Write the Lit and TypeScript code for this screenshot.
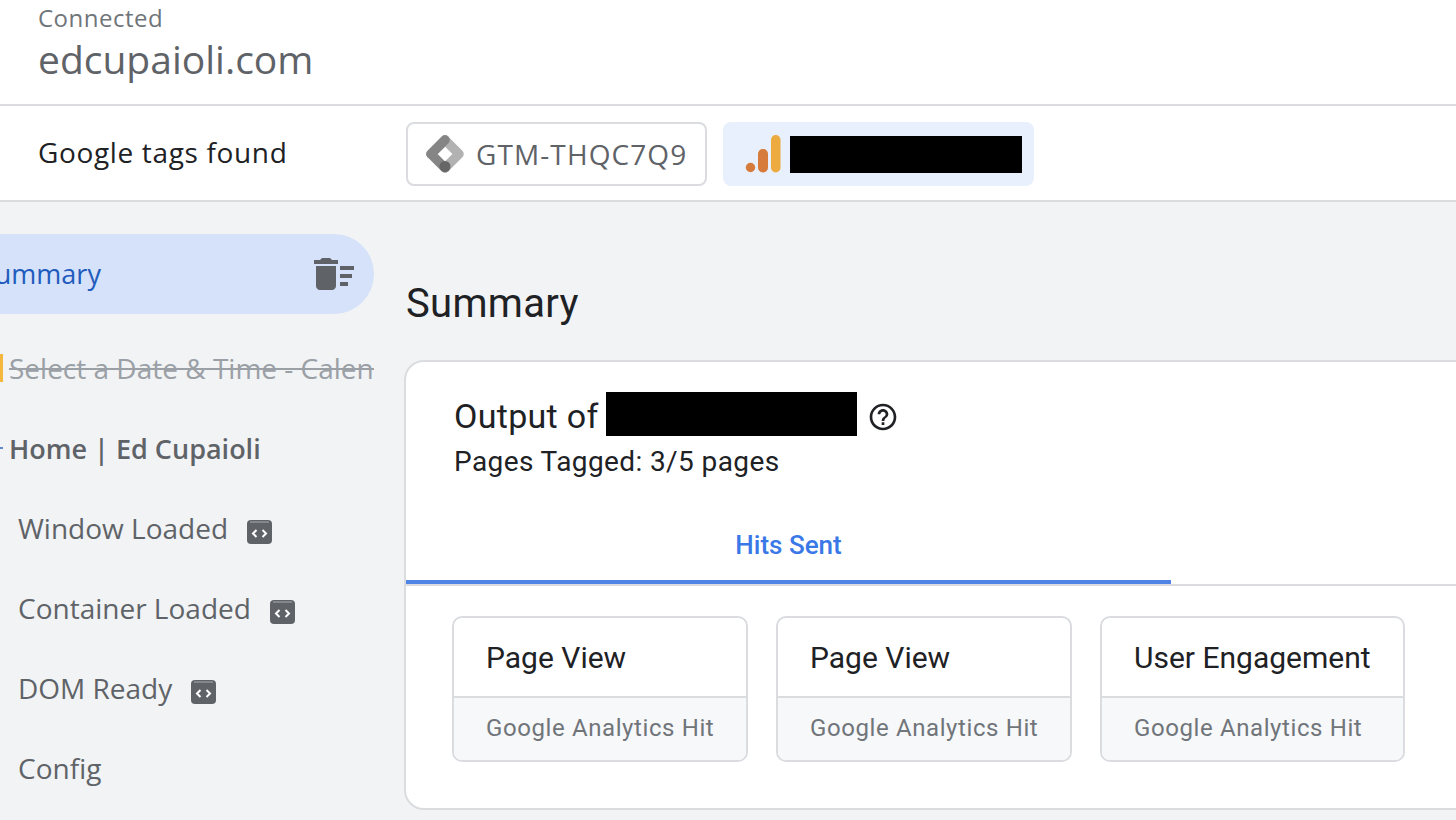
import { LitElement, html, css, svg } from 'lit';
import { customElement } from 'lit/decorators.js';

const codeBadge = html`<svg class="badge" width="25" height="24" viewBox="0 0 25 24">
  <rect x="0" y="0" width="25" height="24" rx="4" fill="#5f6368"></rect>
  <path d="M3 2h19" stroke="#a9acb0" stroke-width="1" fill="none"></path>
  <path d="M9.5 10l-3.5 3.5 3.5 3.5M15.5 10l3.5 3.5-3.5 3.5" stroke="#fff" stroke-width="2" fill="none"></path>
</svg>`;

const gtmIcon = svg`<svg class="tag-icon" width="38" height="38" viewBox="0 0 38 38">
  <path d="M19 5L5 19l14 14" stroke="#858585" stroke-width="9.5" stroke-linecap="round" stroke-linejoin="round" fill="none"></path>
  <path d="M19 5l14 14-14 14" stroke="#b2b2b2" stroke-width="9.5" stroke-linecap="round" stroke-linejoin="round" fill="none"></path>
  <path d="M5 19L19 5" stroke="#858585" stroke-width="9.5" stroke-linecap="round" fill="none"></path>
  <circle cx="19" cy="31.5" r="5.5" fill="#666"></circle>
</svg>`;

const gaIcon = svg`<svg width="36" height="40" viewBox="0 0 36 40">
  <circle cx="5.5" cy="33.5" r="4.7" fill="#d67b3b"></circle>
  <rect x="13" y="15" width="10" height="23.5" rx="4.7" fill="#d67b3b"></rect>
  <rect x="26" y="1" width="9.5" height="37.5" rx="4.7" fill="#ecaa3f"></rect>
</svg>`;

@customElement('app-root')
export class AppRoot extends LitElement {
  static styles = css`
    :host {
      display: block;
      width: 1456px;
      height: 820px;
      overflow: hidden;
      background: #f1f3f5;
      font-family: 'Open Sans', 'Noto Sans', sans-serif;
    }
    .connected {
      background: #fff;
      height: 106px;
      padding: 3px 0 0 38px;
      box-sizing: border-box;
      border-bottom: 2px solid #dadce0;
      color: #5f6368;
    }
    .connected small {
      display: block;
      font-size: 24px;
      letter-spacing: 0.5px;
      line-height: 30px;
      color: #70757a;
    }
    .connected strong {
      display: block;
      font-weight: 400;
      font-size: 39px;
      line-height: 52px;
    }
    .tags {
      background: #fff;
      height: 96px;
      padding: 2px 0 0 38px;
      box-sizing: border-box;
      border-bottom: 2px solid #dadce0;
      display: flex;
      align-items: center;
    }
    .tags h2 {
      margin: 0 0 4px;
      width: 368px;
      font-size: 28px;
      letter-spacing: 0.65px;
      font-weight: 500;
      color: #202124;
    }
    .tag {
      height: 64px;
      box-sizing: border-box;
      border-radius: 8px;
      display: flex;
      align-items: center;
    }
    .tag.gtm {
      width: 301px;
      border: 2px solid #dadce0;
      padding-left: 18px;
      gap: 12px;
      font-size: 28px;
      letter-spacing: 1.1px;
      color: #5f6368;
      margin-right: 16px;
    }
    .tag.ga {
      width: 311px;
      background: #e8f0fd;
      padding-left: 22px;
      gap: 9px;
    }
    .redact {
      display: block;
      background: #000;
    }
    .tag.ga .redact {
      width: 232px;
      height: 37px;
    }
    .body {
      display: flex;
    }
    .side {
      width: 374px;
      flex: none;
      padding-top: 32px;
      overflow: hidden;
    }
    .pill {
      height: 80px;
      background: #d5e2f9;
      border-radius: 0 40px 40px 0;
      display: flex;
      align-items: center;
      justify-content: space-between;
      padding-right: 16px;
      margin-bottom: 16px;
      color: #1f5bbd;
      font-size: 27px;
      font-weight: 500;
    }
    .pill span {
      margin: 0 0 2px -20px;
    }
    .pill svg {
      fill: #5f6368;
    }
    .item {
      height: 80px;
      box-sizing: border-box;
      padding: 0 0 4px 18px;
      display: flex;
      align-items: center;
      gap: 19px;
      font-size: 28px;
      color: #5f6368;
      white-space: nowrap;
      overflow: hidden;
    }
    .badge {
      margin-top: 8px;
    }
    .item.struck {
      padding-left: 0;
      gap: 6px;
      color: #9aa0a6;
      text-decoration: line-through;
    }
    .mark {
      width: 3px;
      height: 28px;
      background: #f4b73f;
      flex: none;
    }
    .item.home {
      padding-left: 0;
      gap: 6px;
      font-size: 27px;
      font-weight: 600;
    }
    .dot {
      width: 3px;
      height: 2px;
      background: #5f86c9;
      flex: none;
    }
    .main {
      flex: 1;
      padding: 77px 0 0 32px;
      min-width: 0;
    }
    .main h1 {
      margin: 0 0 31px;
      font-family: Roboto, sans-serif;
      font-size: 40px;
      letter-spacing: 0.3px;
      line-height: 50px;
      font-weight: 400;
      color: #202124;
    }
    .card {
      width: 1100px;
      height: 450px;
      box-sizing: border-box;
      background: #fff;
      border: 2px solid #dadce0;
      border-radius: 20px;
      font-family: Roboto, sans-serif;
      margin-left: -2px;
    }
    .head {
      padding: 32px 0 0 48px;
      height: 156px;
      box-sizing: border-box;
      color: #202124;
    }
    .title {
      display: flex;
      align-items: center;
      font-size: 34px;
      letter-spacing: 0.3px;
      height: 44px;
    }
    .title .redact {
      width: 251px;
      height: 44px;
      margin: -4px 10px 0 7px;
    }
    .title svg {
      margin-top: 2px;
    }
    .sub {
      font-size: 28px;
      letter-spacing: 0.4px;
      line-height: 36px;
      margin-top: 6px;
    }
    .tabs {
      height: 66px;
      border-bottom: 2px solid #dadce0;
    }
    .tab {
      width: 765px;
      height: 66px;
      box-sizing: border-box;
      border-bottom: 4px solid #4f83e6;
      padding-bottom: 8px;
      color: #3b78e7;
      font-size: 26px;
      font-weight: 500;
      display: flex;
      align-items: center;
      justify-content: center;
    }
    .hits {
      display: flex;
      gap: 28px;
      padding: 30px 0 0 46px;
    }
    .hit {
      min-width: 296px;
      box-sizing: border-box;
      height: 146px;
      border: 2px solid #dadce0;
      border-radius: 10px;
      overflow: hidden;
    }
    .hit b {
      display: flex;
      align-items: center;
      height: 80px;
      padding: 0 32px;
      font-weight: 400;
      font-size: 30px;
      color: #202124;
      box-sizing: border-box;
      border-bottom: 2px solid #dadce0;
    }
    .hit span {
      display: flex;
      align-items: center;
      height: 62px;
      padding: 0 30px 3px 32px;
      box-sizing: border-box;
      background: #f7f8fa;
      font-size: 24px;
      letter-spacing: 0.6px;
      color: #70757a;
    }
  `;

  hit(name: string) {
    return html`<div class="hit"><b>${name}</b><span>Google Analytics Hit</span></div>`;
  }

  render() {
    return html`
      <div class="connected">
        <small>Connected</small>
        <strong>edcupaioli.com</strong>
      </div>
      <div class="tags">
        <h2>Google tags found</h2>
        <div class="tag gtm">${gtmIcon}GTM-THQC7Q9</div>
        <div class="tag ga">${gaIcon}<i class="redact"></i></div>
      </div>
      <div class="body">
        <nav class="side">
          <div class="pill">
            <span>Summary</span>
            <svg width="48" height="48" viewBox="0 0 24 24">
              <path d="M15 16h4v2h-4zm0-8h7v2h-7zm0 4h6v2h-6zM3 18c0 1.1.9 2 2 2h6c1.1 0 2-.9 2-2V8H3v10zM14 5h-3l-1-1H6L5 5H2v2h12z"></path>
            </svg>
          </div>
          <div class="item struck"><i class="mark"></i>Select a Date &amp; Time - Calendly</div>
          <div class="item home"><i class="dot"></i>Home | Ed Cupaioli</div>
          <div class="item">Window Loaded ${codeBadge}</div>
          <div class="item">Container Loaded ${codeBadge}</div>
          <div class="item">DOM Ready ${codeBadge}</div>
          <div class="item">Config</div>
        </nav>
        <main class="main">
          <h1>Summary</h1>
          <section class="card">
            <div class="head">
              <div class="title">
                Output of <i class="redact"></i>
                <svg width="32" height="32" viewBox="0 0 24 24" fill="#202124">
                  <path d="M11 18h2v-2h-2v2zm1-16C6.48 2 2 6.48 2 12s4.48 10 10 10 10-4.48 10-10S17.52 2 12 2zm0 18c-4.41 0-8-3.59-8-8s3.59-8 8-8 8 3.59 8 8-3.59 8-8 8zm0-14c-2.21 0-4 1.79-4 4h2c0-1.1.9-2 2-2s2 .9 2 2c0 2-3 1.75-3 5h2c0-2.25 3-2.5 3-5 0-2.21-1.79-4-4-4z"></path>
                </svg>
              </div>
              <div class="sub">Pages Tagged: 3/5 pages</div>
            </div>
            <div class="tabs"><div class="tab">Hits Sent</div></div>
            <div class="hits">
              ${this.hit('Page View')}
              ${this.hit('Page View')}
              ${this.hit('User Engagement')}
            </div>
          </section>
        </main>
      </div>
    `;
  }
}
